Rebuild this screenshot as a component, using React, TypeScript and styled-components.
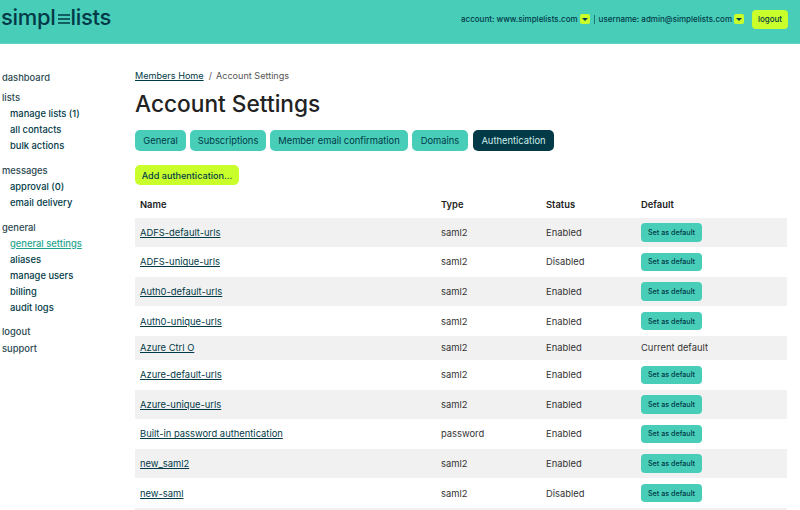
import React from 'react';
import styled, { createGlobalStyle } from 'styled-components';

const colors = {
  teal: '#48cdb9',
  navy: '#023a47',
  lime: '#c9ff2b',
  ink: '#222',
  grey: '#f1f1f1',
};

const GlobalStyle = createGlobalStyle`
  html, body {
    margin: 0;
    height: 510px;
    overflow: hidden;
    background: #fff;
    font-family: Inter, "Open Sans", sans-serif;
  }
  a { color: ${colors.navy}; }
`;

const Header = styled.header`
  height: 43px;
  background: ${colors.teal};
  border-bottom: 1px solid #5fd4c2;
  display: flex;
  align-items: center;
  justify-content: space-between;
  padding: 0 12px 0 1px;
`;

const LogoWrap = styled.div`
  display: flex;
  align-items: center;
  height: 26px;
  margin-top: -9px;
  color: ${colors.navy};
  font-size: 22px;
  font-weight: 500;
  letter-spacing: -0.3px;
  svg { margin: 0 1px 0 2px; }
`;

const UserBar = styled.div`
  display: flex;
  align-items: center;
  margin-top: -5px;
  font-size: 8px;
  font-weight: 500;
  color: ${colors.navy};
  white-space: nowrap;
`;

const Caret = styled.span`
  width: 10px;
  height: 10px;
  margin-left: 2px;
  border-radius: 2px;
  background: ${colors.lime};
  display: inline-flex;
  align-items: center;
  justify-content: center;
  &::after {
    content: '';
    border-left: 3px solid transparent;
    border-right: 3px solid transparent;
    border-top: 3px solid ${colors.navy};
  }
`;

const Divider = styled.span`
  width: 1px;
  height: 9px;
  margin: 0 4px;
  background: ${colors.navy};
  opacity: 0.6;
`;

const LogoutButton = styled.button`
  margin-left: 8px;
  width: 36px;
  height: 19px;
  padding: 0;
  border: 0;
  border-radius: 4px;
  background: ${colors.lime};
  color: ${colors.navy};
  font: 500 8px Inter, sans-serif;
`;

const Body = styled.div`
  display: flex;
`;

const Sidebar = styled.nav`
  width: 135px;
  flex-shrink: 0;
  padding: 26px 0 0 2px;
  box-sizing: border-box;
  font-size: 9.4px;
  font-weight: 500;
  color: ${colors.navy};
`;

const NavGroup = styled.div`
  margin-bottom: 8.4px;
  &:first-child { margin-bottom: 4px; }
`;

const NavItem = styled.div<{ $sub?: boolean; $active?: boolean }>`
  height: 16.1px;
  line-height: 16px;
  padding-left: ${p => (p.$sub ? '8px' : '0')};
  color: ${p => (p.$active ? '#1fa58f' : p.$sub ? colors.navy : '#2a4750')};
  text-decoration: ${p => (p.$active ? 'underline' : 'none')};
`;

const Main = styled.main`
  width: 652px;
  padding-top: 25px;
`;

const Breadcrumb = styled.div`
  font-size: 9.1px;
  line-height: 13px;
  color: #555;
  a { margin-right: 5px; }
  span { margin-right: 4px; }
`;

const Title = styled.h1`
  margin: 6px 0 10px;
  font-size: 22.7px;
  line-height: 32px;
  font-weight: 500;
  color: ${colors.ink};
`;

const Tabs = styled.div`
  display: flex;
  gap: 4px;
  margin-bottom: 14px;
`;

const Tab = styled.div<{ $active?: boolean; $w: number }>`
  width: ${p => p.$w}px;
  height: 21px;
  line-height: 21px;
  text-align: center;
  border-radius: 5px;
  font-size: 9.4px;
  background: ${p => (p.$active ? colors.navy : colors.teal)};
  color: ${p => (p.$active ? '#cfeee9' : colors.navy)};
  ${p => (p.$active ? 'margin-left: 1px;' : '')}
`;

const AddButton = styled.button`
  display: block;
  width: 104px;
  height: 20px;
  padding: 0;
  border: 0;
  border-radius: 5px;
  background: ${colors.lime};
  color: ${colors.navy};
  font: 500 9.1px Inter, sans-serif;
`;

const Table = styled.div`
  margin-top: 10px;
`;

const Row = styled.div<{ $h: number; $even?: boolean }>`
  display: grid;
  grid-template-columns: 301px 105px 95px 1fr;
  align-items: center;
  height: ${p => p.$h}px;
  padding-left: 5px;
  font-size: 9.4px;
  color: #333;
  background: ${p => (p.$even ? colors.grey : '#fff')};
`;

const HeadRow = styled(Row)`
  box-sizing: border-box;
  padding-bottom: 3px;
`;

const HeadCell = styled.div`
  font-weight: 600;
  color: ${colors.ink};
`;

const DefaultButton = styled.button`
  display: block;
  width: 61px;
  height: 18.5px;
  padding: 0;
  border: 0;
  border-radius: 4px;
  background: ${colors.teal};
  color: ${colors.navy};
  font: 500 7.2px Inter, sans-serif;
`;

type Auth = { name: string; type: string; status: string; current?: boolean };

const rows: Auth[] = [
  { name: 'ADFS-default-urls', type: 'saml2', status: 'Enabled' },
  { name: 'ADFS-unique-urls', type: 'saml2', status: 'Disabled' },
  { name: 'Auth0-default-urls', type: 'saml2', status: 'Enabled' },
  { name: 'Auth0-unique-urls', type: 'saml2', status: 'Enabled' },
  { name: 'Azure Ctrl O', type: 'saml2', status: 'Enabled', current: true },
  { name: 'Azure-default-urls', type: 'saml2', status: 'Enabled' },
  { name: 'Azure-unique-urls', type: 'saml2', status: 'Enabled' },
  { name: 'Built-in password authentication', type: 'password', status: 'Enabled' },
  { name: 'new_saml2', type: 'saml2', status: 'Enabled' },
  { name: 'new-saml', type: 'saml2', status: 'Disabled' },
];

const tabs = [
  { label: 'General', w: 51 },
  { label: 'Subscriptions', w: 76 },
  { label: 'Member email confirmation', w: 138 },
  { label: 'Domains', w: 56 },
  { label: 'Authentication', w: 81, active: true },
];

const Logo = () => (
  <LogoWrap>
    simpl
    <svg width="12" height="16" viewBox="0 0 12 16" aria-hidden="true">
      <path d="M0 6h12M0 10h12M0 14h12" stroke={colors.navy} strokeWidth="1.6" fill="none" />
    </svg>
    lists
  </LogoWrap>
);

const App = () => (
  <>
    <GlobalStyle />
    <Header>
      <Logo />
      <UserBar>
        account: www.simplelists.com
        <Caret />
        <Divider />
        username: admin@simplelists.com
        <Caret />
        <LogoutButton>logout</LogoutButton>
      </UserBar>
    </Header>
    <Body>
      <Sidebar>
        <NavGroup>
          <NavItem>dashboard</NavItem>
        </NavGroup>
        <NavGroup>
          <NavItem>lists</NavItem>
          <NavItem $sub>manage lists (1)</NavItem>
          <NavItem $sub>all contacts</NavItem>
          <NavItem $sub>bulk actions</NavItem>
        </NavGroup>
        <NavGroup>
          <NavItem>messages</NavItem>
          <NavItem $sub>approval (0)</NavItem>
          <NavItem $sub>email delivery</NavItem>
        </NavGroup>
        <NavGroup>
          <NavItem>general</NavItem>
          <NavItem $sub $active>general settings</NavItem>
          <NavItem $sub>aliases</NavItem>
          <NavItem $sub>manage users</NavItem>
          <NavItem $sub>billing</NavItem>
          <NavItem $sub>audit logs</NavItem>
        </NavGroup>
        <NavItem>logout</NavItem>
        <NavItem>support</NavItem>
      </Sidebar>
      <Main>
        <Breadcrumb>
          <a href="#home">Members Home</a>
          <span>/</span>
          Account Settings
        </Breadcrumb>
        <Title>Account Settings</Title>
        <Tabs>
          {tabs.map(t => (
            <Tab key={t.label} $w={t.w} $active={t.active}>{t.label}</Tab>
          ))}
        </Tabs>
        <AddButton>Add authentication...</AddButton>
        <Table>
          <HeadRow $h={22.6}>
            <HeadCell>Name</HeadCell>
            <HeadCell>Type</HeadCell>
            <HeadCell>Status</HeadCell>
            <HeadCell>Default</HeadCell>
          </HeadRow>
          {rows.map((r, i) => (
            <Row key={r.name} $h={r.current ? 24 : 29.6} $even={i % 2 === 0}>
              <div><a href="#auth">{r.name}</a></div>
              <div>{r.type}</div>
              <div>{r.status}</div>
              <div>{r.current ? 'Current default' : <DefaultButton>Set as default</DefaultButton>}</div>
            </Row>
          ))}
          <Row $h={30} $even />
        </Table>
      </Main>
    </Body>
  </>
);

export default App;
